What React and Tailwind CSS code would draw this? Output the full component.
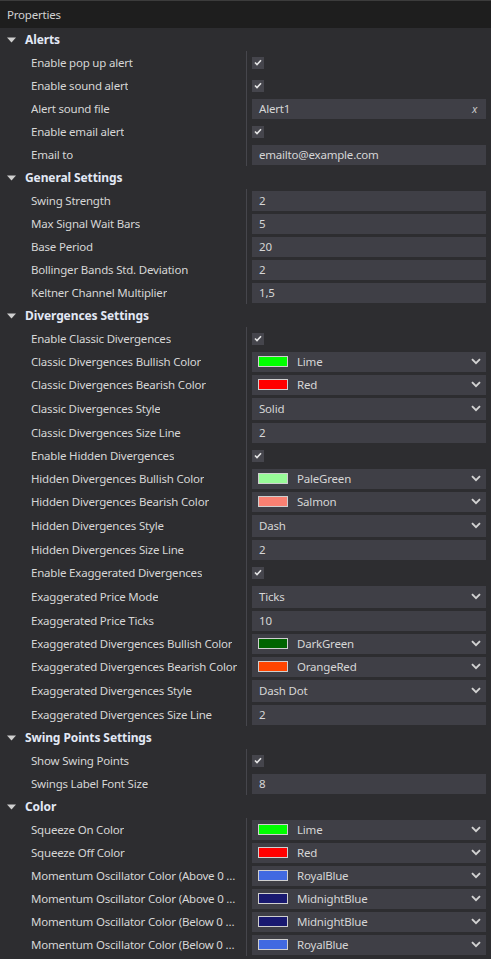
import React from "react";

const C = {
  Lime: "#00ff00",
  Red: "#ff0000",
  PaleGreen: "#98fb98",
  Salmon: "#fa8072",
  DarkGreen: "#006400",
  OrangeRed: "#ff4500",
  RoyalBlue: "#4169e1",
  MidnightBlue: "#191970",
};

const sections = [
  {
    title: "Alerts",
    rows: [
      ["Enable pop up alert", "check"],
      ["Enable sound alert", "check"],
      ["Alert sound file", "file", "Alert1"],
      ["Enable email alert", "check"],
      ["Email to", "text", "emailto@example.com"],
    ],
  },
  {
    title: "General Settings",
    rows: [
      ["Swing Strength", "text", "2"],
      ["Max Signal Wait Bars", "text", "5"],
      ["Base Period", "text", "20"],
      ["Bollinger Bands Std. Deviation", "text", "2"],
      ["Keltner Channel Multiplier", "text", "1,5"],
    ],
  },
  {
    title: "Divergences Settings",
    rows: [
      ["Enable Classic Divergences", "check"],
      ["Classic Divergences Bullish Color", "color", "Lime"],
      ["Classic Divergences Bearish Color", "color", "Red"],
      ["Classic Divergences Style", "combo", "Solid"],
      ["Classic Divergences Size Line", "text", "2"],
      ["Enable Hidden Divergences", "check"],
      ["Hidden Divergences Bullish Color", "color", "PaleGreen"],
      ["Hidden Divergences Bearish Color", "color", "Salmon"],
      ["Hidden Divergences Style", "combo", "Dash"],
      ["Hidden Divergences Size Line", "text", "2"],
      ["Enable Exaggerated Divergences", "check"],
      ["Exaggerated Price Mode", "combo", "Ticks"],
      ["Exaggerated Price Ticks", "text", "10"],
      ["Exaggerated Divergences Bullish Color", "color", "DarkGreen"],
      ["Exaggerated Divergences Bearish Color", "color", "OrangeRed"],
      ["Exaggerated Divergences Style", "combo", "Dash Dot"],
      ["Exaggerated Divergences Size Line", "text", "2"],
    ],
  },
  {
    title: "Swing Points Settings",
    rows: [
      ["Show Swing Points", "check"],
      ["Swings Label Font Size", "text", "8"],
    ],
  },
  {
    title: "Color",
    rows: [
      ["Squeeze On Color", "color", "Lime"],
      ["Squeeze Off Color", "color", "Red"],
      ["Momentum Oscillator Color (Above 0 and Rising)", "color", "RoyalBlue"],
      ["Momentum Oscillator Color (Above 0 and Falling)", "color", "MidnightBlue"],
      ["Momentum Oscillator Color (Below 0 and Falling)", "color", "MidnightBlue"],
      ["Momentum Oscillator Color (Below 0 and Rising)", "color", "RoyalBlue"],
    ],
  },
];

function Chevron() {
  return (
    <svg width="10" height="7" viewBox="0 0 10 7" className="shrink-0">
      <path d="M1 1.2 L5 5.2 L9 1.2" fill="none" stroke="#d2d2d2" strokeWidth="1.9" />
    </svg>
  );
}

function Value({ kind, value }) {
  if (kind === "check") {
    return (
      <div className="w-[12px] h-[12px] bg-[#45454c] flex items-center justify-center">
        <svg width="8" height="7" viewBox="0 0 8 7">
          <path d="M1 3.5 L3 5.5 L7 1.2" fill="none" stroke="#e6e6e6" strokeWidth="1.6" />
        </svg>
      </div>
    );
  }
  if (kind === "text") {
    return (
      <div className="h-[20px] w-full bg-[#3f3f46] flex items-center pl-[7px] text-[#d6d6d6]">
        <span className="leading-[16px] whitespace-nowrap">{value}</span>
      </div>
    );
  }
  if (kind === "file") {
    return (
      <div className="h-[20px] w-full bg-[#3f3f46] flex items-center pl-[7px] pr-[9px] text-[#d6d6d6]">
        <span className="flex-1 leading-[16px] whitespace-nowrap">{value}</span>
        <span className="italic text-[#c8c8c8] text-[11px] leading-[16px]">x</span>
      </div>
    );
  }
  if (kind === "color") {
    return (
      <div className="h-[20px] w-full bg-[#3f3f46] flex items-center pl-[6px] pr-[5px] text-[#d6d6d6]">
        <span
          className="w-[30px] h-[11px] border border-[#cfcfcf] shrink-0"
          style={{ backgroundColor: C[value] }}
        />
        <span className="ml-[9px] flex-1 leading-[16px] whitespace-nowrap">{value}</span>
        <Chevron />
      </div>
    );
  }
  return (
    <div className="h-[22px] w-full bg-[#3f3f46] flex items-center pl-[7px] pr-[5px] text-[#d6d6d6]">
      <span className="flex-1 leading-[16px] whitespace-nowrap">{value}</span>
      <Chevron />
    </div>
  );
}

function Row({ row }) {
  const [label, kind, value] = row;
  const h = kind === "combo" ? "h-[25px]" : "h-[23px]";
  return (
    <div className={`flex ${h}`}>
      <div className="w-[246px] shrink-0 pl-[31px] pr-[6px] flex items-center text-[#d6d6d6] overflow-hidden">
        <span className="truncate leading-[17px]">{label}</span>
      </div>
      <div className="w-px bg-[#46464c] shrink-0" />
      <div className="flex-1 flex items-center pl-[5px] pr-[5px]">
        <Value kind={kind} value={value} />
      </div>
    </div>
  );
}

export default function App() {
  return (
    <div
      className="w-[491px] h-[959px] overflow-hidden bg-[#2d2d30] text-[11.5px] tracking-[-0.2px]"
      style={{ fontFamily: '"Noto Sans", "Open Sans", sans-serif' }}
    >
      <div className="h-[28px] bg-[#1e1e1e] border-t border-[#3c3c3c] flex items-center pl-[7px] text-[#d2d2d2]">
        <span className="leading-[16px]">Properties</span>
      </div>
      {sections.map((s) => (
        <div key={s.title}>
          <div className="h-[23px] flex items-center">
            <svg width="9" height="6" viewBox="0 0 9 6" className="ml-[7px] shrink-0">
              <path d="M0 0.5 L9 0.5 L4.5 5.5 Z" fill="#cfcfcf" />
            </svg>
            <span className="ml-[9px] font-bold text-[12px] tracking-[-0.1px] leading-[16px] text-[#e2e8f5]">
              {s.title}
            </span>
          </div>
          {s.rows.map((r) => (
            <Row key={r[0]} row={r} />
          ))}
        </div>
      ))}
    </div>
  );
}
